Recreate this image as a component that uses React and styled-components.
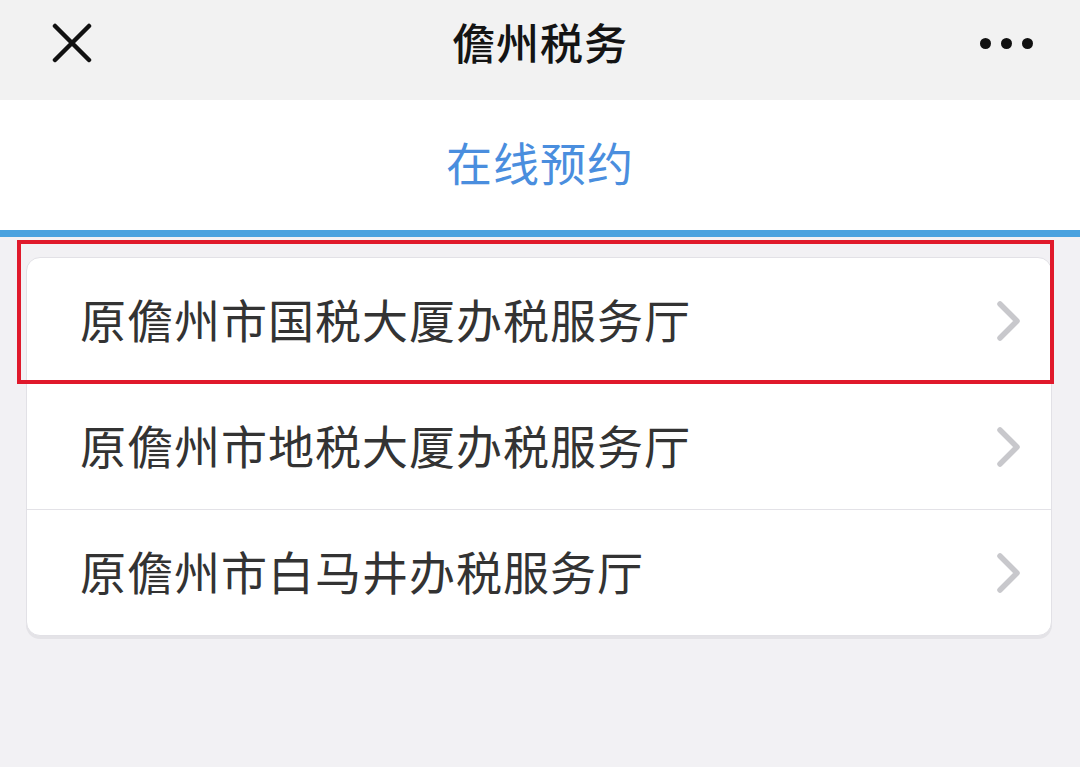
import React from "react";
import styled, { createGlobalStyle } from "styled-components";

const GlobalStyle = createGlobalStyle`
  html, body {
    margin: 0;
    padding: 0;
    background: #f2f1f4;
    font-family: "Noto Sans CJK SC", "Noto Sans", sans-serif;
  }
`;

const Page = styled.div`
  width: 1080px;
  min-height: 767px;
  background: #f2f1f4;
`;

const NavBar = styled.div`
  height: 100px;
  background: #f2f2f2;
  display: grid;
  grid-template-columns: 200px 1fr 200px;
  align-items: center;
`;

const NavLeft = styled.div`
  padding-left: 52px;
  display: flex;
  align-items: center;
  height: 100%;
  padding-bottom: 14px;
  box-sizing: border-box;
`;

const NavTitle = styled.div`
  text-align: center;
  font-size: 43px;
  font-weight: 500;
  color: #141414;
  letter-spacing: 1px;
  padding-bottom: 18px;
`;

const NavRight = styled.div`
  display: flex;
  justify-content: flex-end;
  align-items: center;
  gap: 10px;
  padding-right: 47px;
  padding-bottom: 14px;
`;

const Dot = styled.span`
  width: 11px;
  height: 11px;
  border-radius: 50%;
  background: #111;
`;

const TabHeader = styled.div`
  height: 130px;
  background: #fff;
  display: flex;
  align-items: center;
  justify-content: center;
  font-size: 46px;
  color: #4a8ede;
  letter-spacing: 1px;
  padding-bottom: 8px;
  box-sizing: border-box;
`;

const TabLine = styled.div`
  height: 7px;
  background: #4aa2df;
`;

const ListArea = styled.div`
  position: relative;
  padding: 20px 28px 0 26px;
`;

const Card = styled.div`
  background: #fff;
  border: 1px solid #e2e1e6;
  border-radius: 14px;
  box-shadow: 0 3px 0 #e4e3e7;
  overflow: hidden;
`;

const Row = styled.div`
  height: 125px;
  display: flex;
  align-items: center;
  justify-content: space-between;
  padding: 0 28px 0 53px;
  border-top: ${(p) => (p.first ? "none" : "1px solid #e3e2e7")};
`;

const RowText = styled.span`
  font-size: 46px;
  color: #333;
  letter-spacing: 1px;
  line-height: 1;
  padding-bottom: 5px;
`;

const Highlight = styled.div`
  position: absolute;
  top: 3px;
  left: 17px;
  width: 1037px;
  height: 144px;
  border: 4px solid #e0192b;
  box-sizing: border-box;
  pointer-events: none;
`;

const CloseIcon = () => (
  <svg width="40" height="40" viewBox="0 0 40 40">
    <path d="M3 3 L37 37 M37 3 L3 37" stroke="#111" strokeWidth="4.5" strokeLinecap="round" />
  </svg>
);

const Chevron = () => (
  <svg width="28" height="42" viewBox="0 0 28 42">
    <path d="M5 4 L22 21 L5 38" fill="none" stroke="#c8c8cc" strokeWidth="5.5" strokeLinecap="round" strokeLinejoin="round" />
  </svg>
);

const halls = [
  "原儋州市国税大厦办税服务厅",
  "原儋州市地税大厦办税服务厅",
  "原儋州市白马井办税服务厅",
];

export default function App() {
  return (
    <Page>
      <GlobalStyle />
      <NavBar>
        <NavLeft>
          <CloseIcon />
        </NavLeft>
        <NavTitle>儋州税务</NavTitle>
        <NavRight>
          <Dot />
          <Dot />
          <Dot />
        </NavRight>
      </NavBar>
      <TabHeader>在线预约</TabHeader>
      <TabLine />
      <ListArea>
        <Card>
          {halls.map((name, i) => (
            <Row key={name} first={i === 0}>
              <RowText>{name}</RowText>
              <Chevron />
            </Row>
          ))}
        </Card>
        <Highlight />
      </ListArea>
    </Page>
  );
}
